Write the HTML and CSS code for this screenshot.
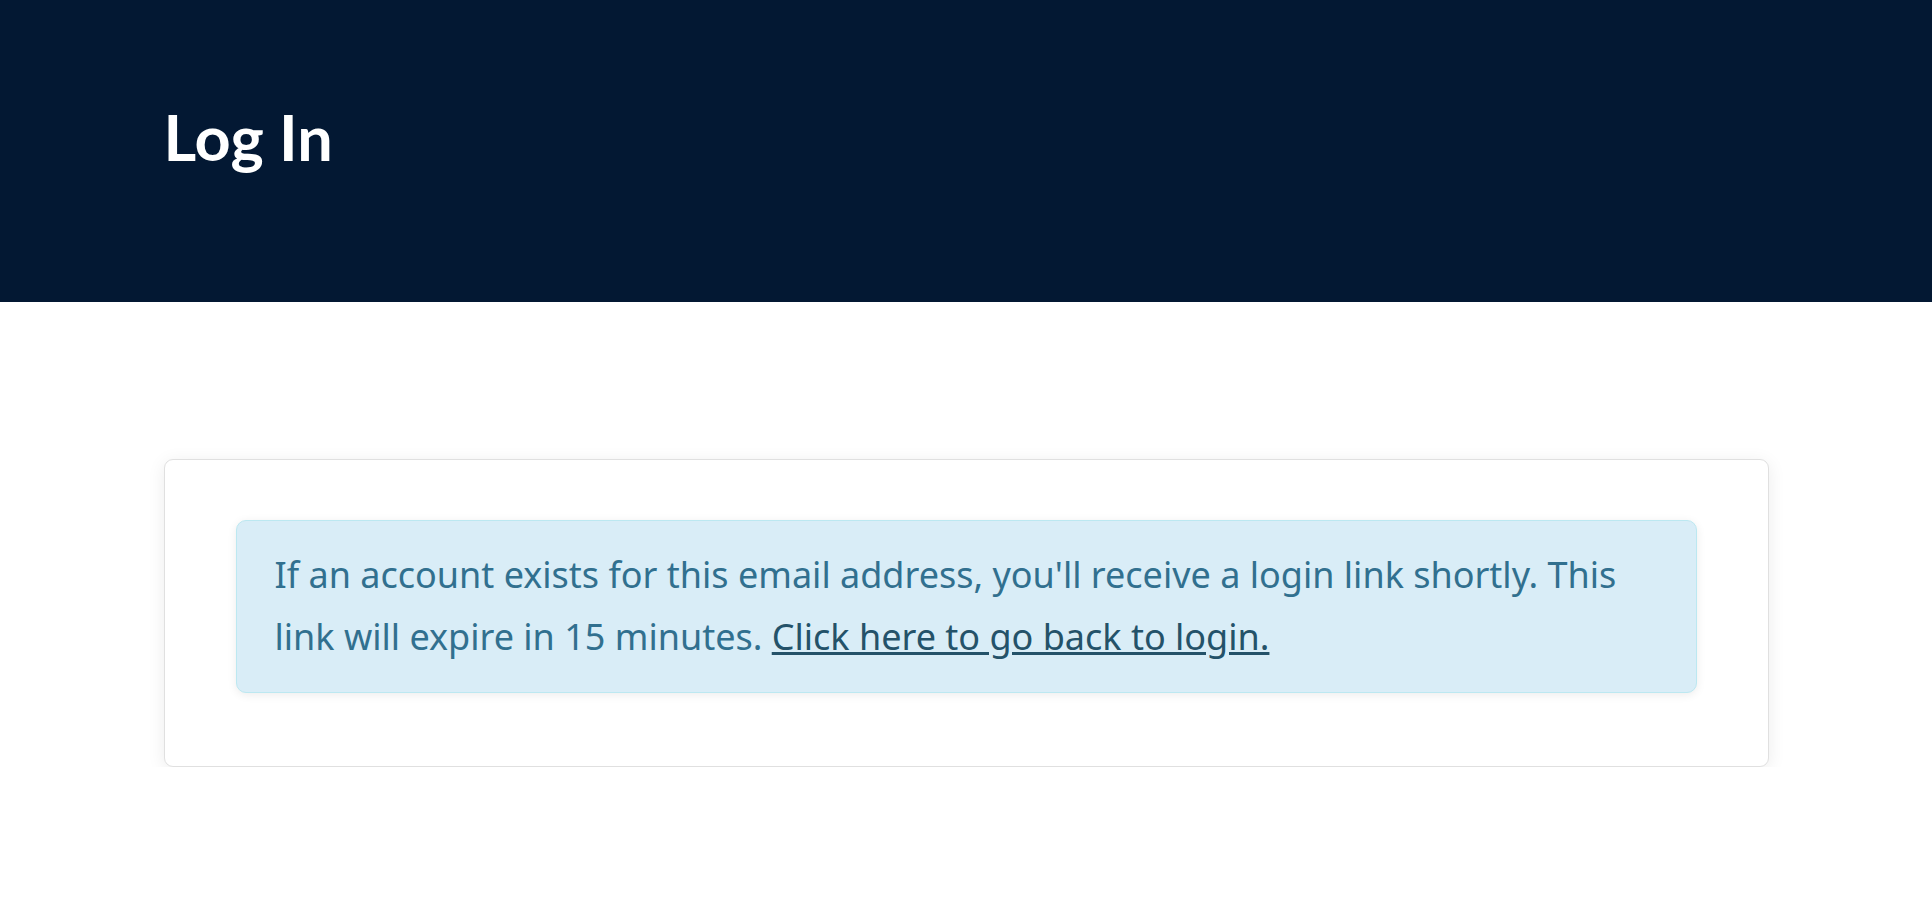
FILE: index.html
```html
<!DOCTYPE html>
<html lang="en">
<head>
  <meta charset="UTF-8">
  <meta name="viewport" content="width=device-width, initial-scale=1.0">
  <title>Log In</title>
  <link rel="stylesheet" href="styles.css">
</head>
<body>
  <header class="page-header">
    <div class="container">
      <h1>Log In</h1>
    </div>
  </header>

  <main class="container">
    <div class="card">
      <div class="alert alert-info">
        If an account exists for this email address, you'll receive a login link shortly. This link will expire in 15 minutes. <a href="#" class="alert-link">Click here to go back to login.</a>
      </div>
    </div>
  </main>
</body>
</html>
```

FILE: styles.css
```css
body {
  margin: 0;
  font-family: "Noto Sans", "Open Sans", sans-serif;
  background-color: #fff;
  color: #333;
}

.container {
  width: 1605px;
  margin: 0 auto;
}

.page-header {
  height: 302px;
  box-sizing: border-box;
  padding-top: 99px;
  background-color: #031833;
}

.page-header h1 {
  margin: 0;
  font-family: Lato, "Liberation Sans", sans-serif;
  font-weight: 700;
  font-size: 63px;
  line-height: 1.2;
  color: #fff;
}

main.container {
  padding-top: 157px;
}

.card {
  box-sizing: border-box;
  padding: 60px 71px 73px;
  background-color: #fff;
  border: 1px solid #e0e0e0;
  border-radius: 9px;
  box-shadow: 0 3px 18px rgba(0,0,0,0.08);
}

.alert {
  padding: 23px 38px 24px;
  border: 1px solid transparent;
  border-radius: 10px;
  font-size: 36px;
  line-height: 62px;
}

.alert-info {
  background-color: #d9edf7;
  border-color: #bce8f1;
  color: #31708f;
  box-shadow: 0 2px 10px rgba(0,0,0,0.08);
}

.alert-link {
  color: #245269;
  text-decoration: underline;
}
```
